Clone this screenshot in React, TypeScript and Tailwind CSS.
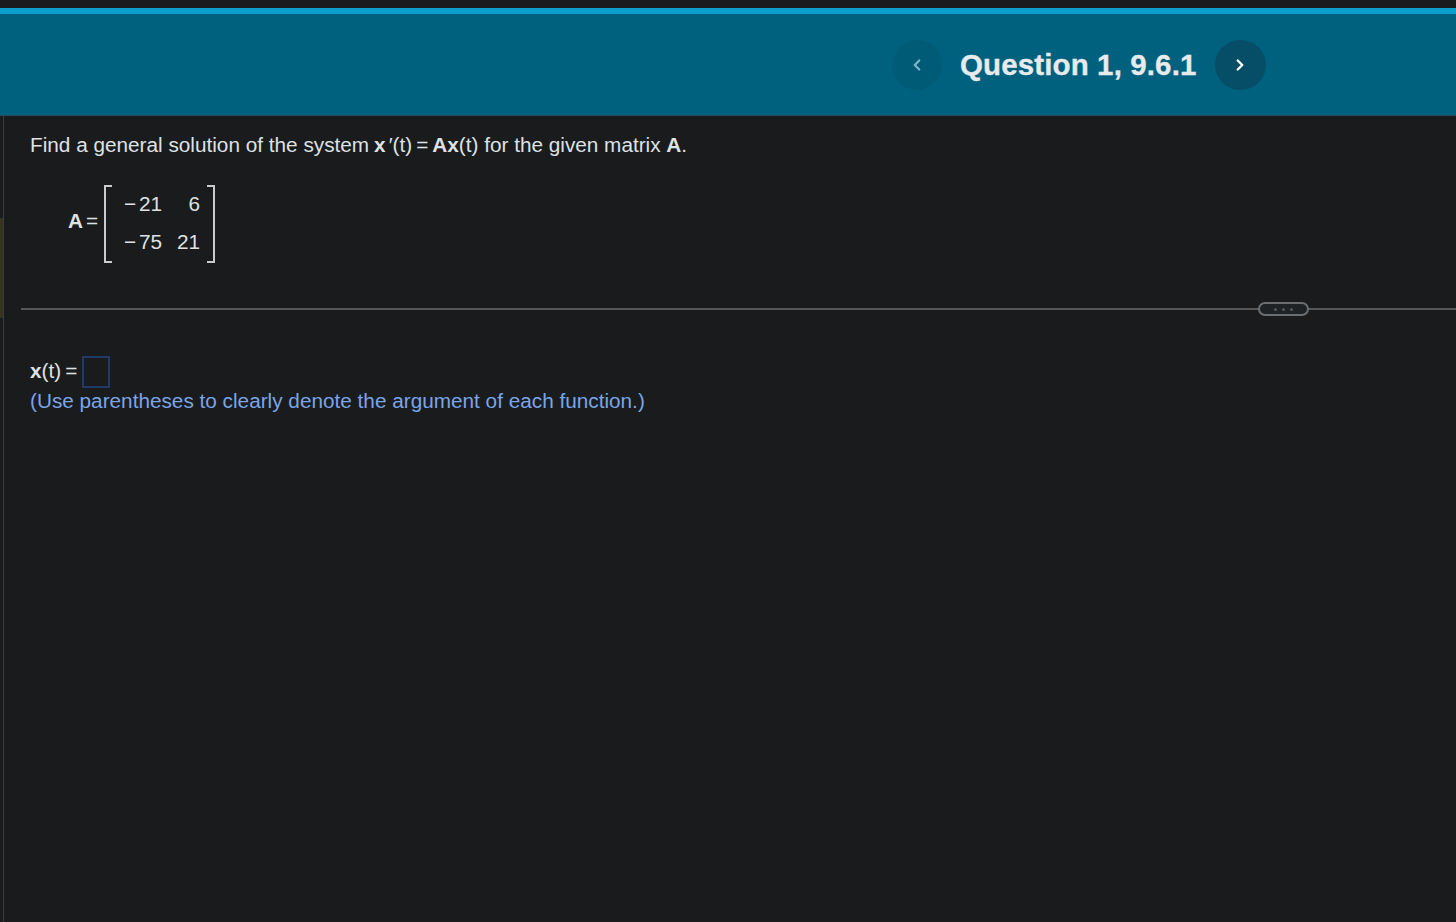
import { ChevronLeft, ChevronRight } from "lucide-react";

export default function App() {
  return (
    <div className="h-[922px] overflow-hidden bg-[#191b1d] text-[#dfe1e3] font-['Liberation_Sans',Arial,sans-serif] flex flex-col">
      <div className="h-[8px] shrink-0 bg-[#191b1d]" />
      <header className="h-[108px] shrink-0 bg-[#00617e] border-t-[6px] border-[#0a9fcd] border-b border-b-[#2a4c5a] flex items-center pl-[892px]">
        <button className="w-[50px] h-[50px] rounded-full bg-[#005b76] flex items-center justify-center text-[#7fb4c6]">
          <ChevronLeft size={18} strokeWidth={3} />
        </button>
        <h1 className="ml-[18px] w-[255px] text-[29.5px] leading-none font-bold tracking-[0.12px] text-[#e8eaec] [-webkit-text-stroke:0.3px_#e8eaec]">Question 1, 9.6.1</h1>
        <button className="w-[51px] h-[50px] rounded-full bg-[#064e68] flex items-center justify-center text-white pr-[1px]">
          <ChevronRight size={18} strokeWidth={3.25} />
        </button>
      </header>
      <main className="flex-1 flex min-h-0">
        <div className="w-[3px] shrink-0 flex flex-col">
          <div className="h-[102px]" />
          <div className="h-[100px] bg-[#37331f]" />
        </div>
        <div className="w-[1px] shrink-0 bg-[#3a3c3f]" />
        <div className="flex-1 min-w-0 flex flex-col">
          <p className="pl-[26px] pt-[16px] text-[20.75px] leading-[26px] h-[42px]">
            Find a general solution of the system<b className="ml-[5px]">x</b><span className="ml-[3px]">′</span>(t)<span className="mx-[4px]">=</span><b>Ax</b>(t) for the given matrix <b>A</b>.
          </p>
          <div className="pl-[64px] pt-[27px] flex items-center h-[105px] text-[20.75px]">
            <b className="-mt-[7px]">A</b><span className="ml-[3px] -mt-[7px]">=</span>
            <div className="ml-[6px] relative w-[111px] h-[78px] grid grid-cols-[38px_38px] grid-rows-2 pl-[20px] pb-[3px] items-center justify-items-end">
              <span className="absolute left-0 top-0 bottom-0 w-[8px] border-l-2 border-t-2 border-b-2 border-[#c9cbcd]" />
              <span className="absolute right-0 top-0 bottom-0 w-[8px] border-r-2 border-t-2 border-b-2 border-[#c9cbcd]" />
              <span><span className="mr-[3px]">−</span>21</span><span>6</span>
              <span><span className="mr-[3px]">−</span>75</span><span>21</span>
            </div>
          </div>
          <div className="mt-[45px] ml-[17px] relative h-[2px] bg-[#55575a]">
            <span className="absolute left-[1237px] -top-[6px] w-[51px] h-[14px] rounded-full border-2 border-[#6b6e70] bg-[#1f2225] flex items-center justify-center gap-[5px]">
              <i className="w-[3px] h-[3px] rounded-full bg-[#55585b]" />
              <i className="w-[3px] h-[3px] rounded-full bg-[#55585b]" />
              <i className="w-[3px] h-[3px] rounded-full bg-[#55585b]" />
            </span>
          </div>
          <div className="pl-[26px] pt-[46px] flex items-center text-[20.75px]">
            <span className="-mt-[2px]"><b>x</b>(t)<span className="ml-[4px]">=</span></span>
            <span className="ml-[5px] w-[28px] h-[32px] border-2 border-[#1f3a66]" />
          </div>
          <p className="pl-[26px] text-[20.75px] leading-[26px] text-[#7aa5e8]">(Use parentheses to clearly denote the argument of each function.)</p>
        </div>
      </main>
    </div>
  );
}
